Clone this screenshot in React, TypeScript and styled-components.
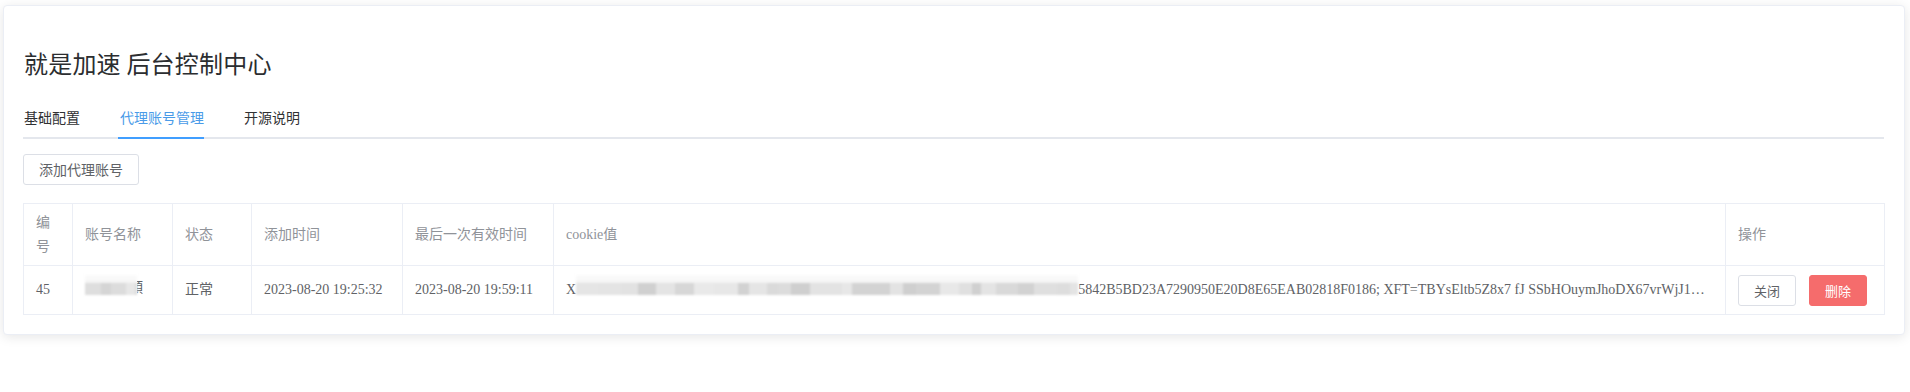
import styled, { createGlobalStyle } from 'styled-components';

const GlobalStyle = createGlobalStyle`
  html, body {
    margin: 0;
    padding: 0;
    background: #ffffff;
  }
  body {
    font-family: "Noto Sans CJK SC", "Noto Sans", sans-serif;
  }
`;

const Page = styled.div`
  padding: 5px 5px 0 3px;
  height: 387px;
`;

const Card = styled.section`
  background: #fff;
  border: 1px solid #ebeef5;
  border-radius: 4px;
  box-shadow: 0 2px 12px 0 rgba(0, 0, 0, 0.1);
  padding: 19px 20px 19px 19px;
`;

const Title = styled.h2`
  margin: 20px 0 0 1px;
  height: 36px;
  line-height: 36px;
  font-size: 24px;
  font-weight: 400;
  color: #2b2d30;
  letter-spacing: 0.2px;
`;

const TabBar = styled.div`
  margin-top: 16px;
  display: flex;
  height: 40px;
  border-bottom: 2px solid #e4e7ed;
`;

const Tab = styled.div<{ $active?: boolean }>`
  position: relative;
  padding: 0 20px;
  line-height: 40px;
  font-size: 14px;
  color: ${(p) => (p.$active ? '#4a9be8' : '#303133')};

  &:first-child {
    padding-left: 1px;
  }

  &::after {
    content: '';
    position: absolute;
    left: 18px;
    right: 20px;
    bottom: -2px;
    height: 2px;
    background: ${(p) => (p.$active ? '#409eff' : 'transparent')};
  }
`;

const Toolbar = styled.div`
  margin-top: 15px;
  display: flex;
`;

const Button = styled.button<{ $danger?: boolean; $size?: 'small' }>`
  height: 31px;
  padding: 0 15px;
  border-radius: 3px;
  border: 1px solid ${(p) => (p.$danger ? '#f56c6c' : '#dcdfe6')};
  background: ${(p) => (p.$danger ? '#f56c6c' : '#fff')};
  color: ${(p) => (p.$danger ? '#fff' : '#606266')};
  font-family: "Noto Sans CJK SC", sans-serif;
  font-size: ${(p) => (p.$size ? '13px' : '14px')};
  line-height: 29px;
  cursor: pointer;
`;

const Table = styled.table`
  margin-top: 18px;
  width: 1861px;
  border-collapse: collapse;
  table-layout: fixed;
  font-family: "Liberation Serif", "Noto Sans CJK SC", serif;
  font-size: 14px;
  border: 1px solid #ebeef5;
`;

const Th = styled.th`
  height: 62px;
  box-sizing: border-box;
  padding: 6px 12px;
  line-height: 24px;
  text-align: left;
  font-weight: 400;
  color: #909399;
  border: 1px solid #ebeef5;
  vertical-align: middle;
  font-family: "Liberation Serif", "Noto Sans CJK SC", serif;
`;

const Td = styled.td`
  height: 49px;
  box-sizing: border-box;
  padding: 0 12px;
  line-height: 24px;
  color: #606266;
  border: 1px solid #ebeef5;
  vertical-align: middle;
  white-space: nowrap;
  overflow: hidden;
  text-overflow: ellipsis;
`;

const Actions = styled.div`
  display: flex;
  gap: 13px;
`;

const Mosaic = styled.span<{ $w: number }>`
  position: relative;
  display: inline-flex;
  width: ${(p) => p.$w}px;
  height: 12px;
  vertical-align: -1px;
  filter: blur(0.8px);

  &::before {
    content: '';
    position: absolute;
    left: 0;
    right: 0;
    top: -10px;
    height: 10px;
    background: linear-gradient(180deg, rgba(235, 235, 235, 0) 0%, rgba(232, 232, 232, 0.5) 100%);
  }
`;

const Tile = styled.span`
  height: 100%;
  flex: none;
`;

const Clip = styled.span`
  display: inline-block;
  width: 6px;
  height: 16px;
  line-height: 16px;
  overflow: hidden;
  vertical-align: -2px;
  direction: rtl;
`;

const tiles = (count: number, seed: number) => {
  const out: { w: number; g: number }[] = [];
  let s = seed;
  for (let i = 0; i < count; i++) {
    s = (s * 9301 + 49297) % 233280;
    const r = s / 233280;
    s = (s * 9301 + 49297) % 233280;
    const r2 = s / 233280;
    out.push({ w: 8 + Math.round(r * 16), g: Math.round(206 + r2 * 28) });
  }
  return out;
};

const MosaicBar = ({ width, seed }: { width: number; seed: number }) => {
  const list = tiles(60, seed);
  let used = 0;
  const shown = [];
  for (const t of list) {
    if (used >= width) break;
    const w = Math.min(t.w, width - used);
    used += w;
    shown.push({ ...t, w });
  }
  return (
    <Mosaic $w={width}>
      {shown.map((t, i) => (
        <Tile key={i} style={{ width: t.w, background: `rgb(${t.g},${t.g},${t.g})` }} />
      ))}
    </Mosaic>
  );
};

const columns = [
  { label: '编号', width: 49 },
  { label: '账号名称', width: 100 },
  { label: '状态', width: 79 },
  { label: '添加时间', width: 151 },
  { label: '最后一次有效时间', width: 151 },
  { label: 'cookie值', width: 1172 },
  { label: '操作', width: 159 },
];

export default function App() {
  return (
    <>
      <GlobalStyle />
      <Page>
        <Card>
          <Title>就是加速 后台控制中心</Title>
          <TabBar>
            <Tab>基础配置</Tab>
            <Tab $active>代理账号管理</Tab>
            <Tab>开源说明</Tab>
          </TabBar>
          <Toolbar>
            <Button>添加代理账号</Button>
          </Toolbar>
          <Table>
            <colgroup>
              {columns.map((c) => (
                <col key={c.label} style={{ width: c.width }} />
              ))}
            </colgroup>
            <thead>
              <tr>
                {columns.map((c) => (
                  <Th key={c.label}>{c.label}</Th>
                ))}
              </tr>
            </thead>
            <tbody>
              <tr>
                <Td>45</Td>
                <Td>
                  <MosaicBar width={52} seed={7} />
                  <Clip>頭</Clip>
                </Td>
                <Td>正常</Td>
                <Td>2023-08-20 19:25:32</Td>
                <Td>2023-08-20 19:59:11</Td>
                <Td>
                  X<MosaicBar width={502} seed={42} />
                  5842B5BD23A7290950E20D8E65EAB02818F0186; XFT=TBYsEltb5Z8x7 fJ SSbHOuymJhoDX67vrWjJ1Qk8aZpR3tLmN0vW
                </Td>
                <Td>
                  <Actions>
                    <Button $size="small">关闭</Button>
                    <Button $size="small" $danger>
                      删除
                    </Button>
                  </Actions>
                </Td>
              </tr>
            </tbody>
          </Table>
        </Card>
      </Page>
    </>
  );
}
